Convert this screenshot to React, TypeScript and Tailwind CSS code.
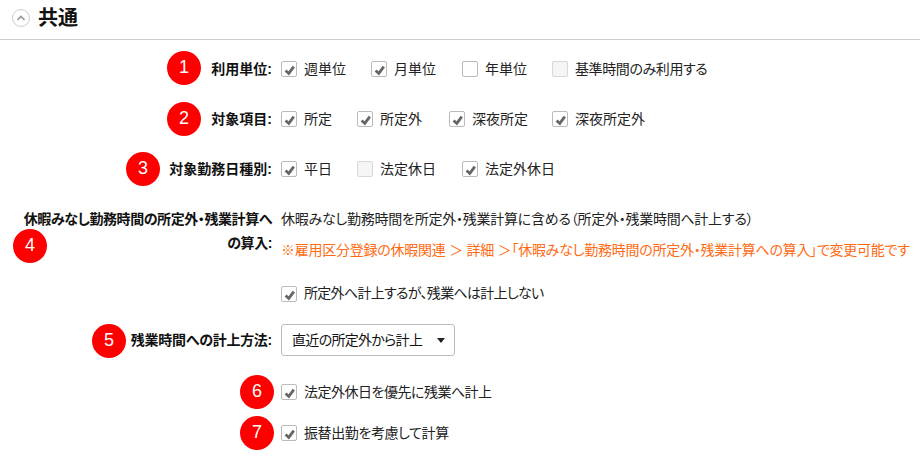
import { ReactNode } from "react";

const FONT = "font-['Liberation_Sans','Noto_Sans_CJK_JP',sans-serif] [font-feature-settings:'palt']";

function Check({ on = true, disabled = false }: { on?: boolean; disabled?: boolean }) {
  return (
    <span
      className={
        "flex h-4 w-4 shrink-0 items-center justify-center rounded-[2px] border " +
        (disabled ? "border-[#d8d8d8] bg-[#f5f5f5]" : "border-[#bbbbbb] bg-white")
      }
    >
      {on && (
        <svg viewBox="0 0 14 14" className="h-[14px] w-[14px]">
          <path d="M3.6 8.4 L6.8 11.4 L11.8 4.6" fill="none" stroke="#666666" strokeWidth="2.8" />
        </svg>
      )}
    </span>
  );
}

function Item({
  label,
  width,
  on = true,
  disabled = false,
  tight,
}: {
  label: string;
  width?: string;
  on?: boolean;
  disabled?: boolean;
  tight?: string;
}) {
  return (
    <label className={"flex items-center gap-[7px] " + (width ?? "")}>
      <Check on={on} disabled={disabled} />
      <span className={"whitespace-nowrap " + (tight ?? "")}>{label}</span>
    </label>
  );
}

function Badge({ n, className }: { n: number; className: string }) {
  return (
    <span
      className={
        "absolute flex h-[34px] w-[34px] items-center justify-center rounded-full bg-[#ff0000] pb-[2px] font-['Liberation_Sans',sans-serif] text-[18px] text-white " +
        className
      }
    >
      {n}
    </span>
  );
}

function Row({ label, children, className }: { label?: ReactNode; children: ReactNode; className?: string }) {
  return (
    <div className={"flex " + (className ?? "")}>
      <div className="w-[272px] shrink-0 text-right text-[14px] font-bold leading-6 text-[#111111]">{label}</div>
      <div className="ml-[9px] min-w-0 flex-1">{children}</div>
    </div>
  );
}

export default function App() {
  return (
    <div className={"relative h-[462px] w-[920px] overflow-hidden bg-white text-[14px] text-[#222222] " + FONT}>
      {/* Section header */}
      <div className="flex h-[40px] items-center gap-[8px] border-b border-[#cccccc] pl-[12px] pb-[3px]">
        <span className="flex h-[18px] w-[18px] items-center justify-center rounded-full border border-[#cccccc]">
          <svg viewBox="0 0 12 12" className="h-3 w-3">
            <path d="M2.5 7.8 L6 4.4 L9.5 7.8" fill="none" stroke="#999999" strokeWidth="1.7" />
          </svg>
        </span>
        <h2 className="text-[20px] font-bold leading-none text-[#111111]">共通</h2>
      </div>

      <div className="pt-[17px]">
        <Row label="利用単位:" className="h-6 items-center">
          <div className="flex items-center">
            <Item label="週単位" width="w-[90px]" />
            <Item label="月単位" width="w-[91px]" />
            <Item label="年単位" width="w-[90px]" on={false} />
            <Item label="基準時間のみ利用する" on={false} disabled tight="tracking-[-0.4px]" />
          </div>
        </Row>

        <Row label="対象項目:" className="mt-[26px] h-6 items-center">
          <div className="flex items-center">
            <Item label="所定" width="w-[76px]" />
            <Item label="所定外" width="w-[92px]" />
            <Item label="深夜所定" width="w-[103px]" />
            <Item label="深夜所定外" />
          </div>
        </Row>

        <Row label="対象勤務日種別:" className="mt-[26px] h-6 items-center">
          <div className="flex items-center">
            <Item label="平日" width="w-[76px]" />
            <Item label="法定休日" width="w-[105px]" on={false} disabled />
            <Item label="法定外休日" />
          </div>
        </Row>

        <Row
          className="mt-[26px]"
          label={
            <span className="tracking-[-0.42px]">
              休暇みなし勤務時間の所定外・残業計算へ
              <br />
              の算入:
            </span>
          }
        >
          <p className="whitespace-nowrap leading-6 tracking-[-0.25px]">
            休暇みなし勤務時間を所定外・残業計算に含める（所定外・残業時間へ計上する）
          </p>
          <p className="mt-[7px] whitespace-nowrap leading-6 tracking-[-0.25px] text-[#ff6a13]">
            ※雇用区分登録の休暇関連 ＞ 詳細 ＞「休暇みなし勤務時間の所定外・残業計算への算入」で変更可能です
          </p>
          <div className="mt-[21px]">
            <Item label="所定外へ計上するが、残業へは計上しない" tight="tracking-[-0.7px]" />
          </div>
        </Row>

        <Row
          label={<span className="tracking-[-0.27px]">残業時間への計上方法:</span>}
          className="mt-[20px] h-[32px] items-center"
        >
          <div className="flex h-[32px] w-[174px] items-center justify-between rounded-[3px] border border-[#bbbbbb] bg-white pl-[10px] pr-[9px] text-[#111111]">
            <span className="whitespace-nowrap tracking-[-0.7px]">直近の所定外から計上</span>
            <span className="h-0 w-0 border-x-[4px] border-t-[5px] border-x-transparent border-t-[#222222]" />
          </div>
        </Row>

        <Row className="mt-[24px] h-6 items-center">
          <Item label="法定外休日を優先に残業へ計上" tight="tracking-[-0.5px]" />
        </Row>

        <Row className="mt-[17px] h-6 items-center">
          <Item label="振替出勤を考慮して計算" tight="tracking-[-0.4px]" />
        </Row>
      </div>

      <Badge n={1} className="left-[167px] top-[51px]" />
      <Badge n={2} className="left-[167px] top-[102px]" />
      <Badge n={3} className="left-[126px] top-[152px]" />
      <Badge n={4} className="left-[13px] top-[229px]" />
      <Badge n={5} className="left-[92px] top-[324px]" />
      <Badge n={6} className="left-[240px] top-[375px]" />
      <Badge n={7} className="left-[240px] top-[416px]" />
    </div>
  );
}
